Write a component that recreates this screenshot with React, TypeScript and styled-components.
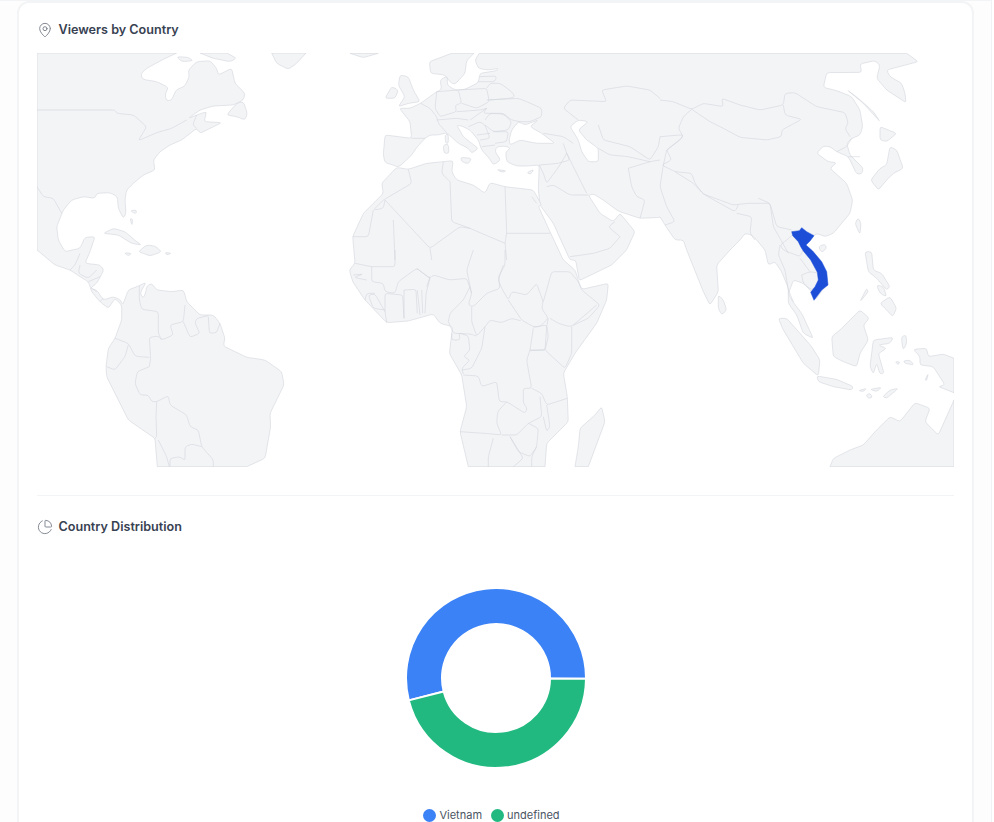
import React from "react";
import styled, { createGlobalStyle } from "styled-components";
import { MapPin, ChartPie } from "lucide-react";

const Global = createGlobalStyle`
  html, body { margin: 0; padding: 0; background: #fff; height: 100%; overflow: hidden; }
  body { font-family: Inter, "Liberation Sans", sans-serif; }
`;

type O = [number, number];
type P = [number, number];
const A: O = [0, 0], B: O = [330, 40], C: O = [660, 40], D: O = [0, 250], E: O = [330, 250], F: O = [660, 250], G: O = [770, 215];

const pts = (o: O, s: string): P[] =>
  s.trim().split(/\s+/).map((p) => {
    const [x, y] = p.split(",").map(Number);
    return [o[0] + x / 3, o[1] + y / 3] as P;
  });

const onFrame = (p: P) => p[0] <= 37.5 || p[0] >= 953.5 || p[1] <= 53.6 || p[1] >= 466.5;
const f = (n: number) => n.toFixed(1);

// rounds each corner by at most a few pixels, so the coasts read as drawn curves
const rounded = (list: P[], isClosed: boolean) => {
  const n = list.length;
  const cut = (a: P, b: P) => {
    const d = Math.hypot(b[0] - a[0], b[1] - a[1]) || 1;
    const t = Math.min(2.6, d * 0.42) / d;
    return [a[0] + (b[0] - a[0]) * t, a[1] + (b[1] - a[1]) * t] as P;
  };
  let d = "";
  for (let i = 0; i < n; i++) {
    const p = list[i];
    const prev = list[(i - 1 + n) % n];
    const next = list[(i + 1) % n];
    const isEnd = !isClosed && (i === 0 || i === n - 1);
    if (isEnd || onFrame(p)) {
      d += `${d ? "L" : "M"}${f(p[0])} ${f(p[1])}`;
    } else {
      const a = cut(p, prev);
      const b = cut(p, next);
      d += `${d ? "L" : "M"}${f(a[0])} ${f(a[1])}Q${f(p[0])} ${f(p[1])} ${f(b[0])} ${f(b[1])}`;
    }
  }
  return d + (isClosed ? "Z" : "");
};

const closed = (...segs: [O, string][]) => rounded(segs.flatMap(([o, s]) => pts(o, s)), true);
const open = (o: O, s: string) => rounded(pts(o, s), false);

const land: string[] = [
  closed(
    [A, "111,159 530,159 490,178 440,205 422,222 428,238 470,245 505,262 495,285 500,303 515,300 528,270 555,258 568,230 565,210 590,185 630,182 650,205 655,225 695,205 705,250 735,280 730,300 700,315 640,318 600,330 565,355 590,345 620,335 612,365 665,368 600,400 590,385 545,420 510,435 480,455 460,480 465,510 430,525 400,550 380,570 375,600 378,640 370,655 355,625 352,590 330,578 290,580 285,595 250,590 215,600 190,630 170,680 175,720 195,755 240,745 255,712 285,710"],
    [D, "270,5 255,40 300,45 312,60 290,100 270,115 290,120 310,150 340,140 362,150 368,165 385,120 415,108 438,97 420,130 430,145 438,125 440,108 455,100 470,120 515,125 550,120 555,135 560,155 600,195 640,195 660,220 675,265 670,288 740,322 795,330 845,365 852,405 810,490 812,530 795,625 740,650 472,650 465,565 385,510 320,380 318,350 325,295 345,265 365,210 365,165 345,145 325,175 300,155 275,125 265,95 240,80 210,60 165,45 111,0"]
  ),
  closed([A, "815,159 830,190 865,208 890,190 918,159"]),
  closed([A, "600,159 640,175 690,185 710,175 680,159"]),
  closed([A, "530,170 565,172 580,182 545,185"]),
  closed([A, "680,345 710,310 730,305 742,340 735,360 710,350"]),
  closed([A, "310,700 340,685 375,695 410,725 425,735 395,730 355,705"]),
  closed([A, "415,755 440,735 465,738 485,755 450,768 430,760"]),
  closed([A, "372,758 395,760 385,768"]),
  closed([A, "495,757 515,760 500,765"]),
  closed([A, "390,632 410,630 408,642"]),
  closed([A, "390,655 398,657 396,677"]),
  closed([B, "60,40 100,53 145,40"]),
  closed([B, "298,65 302,100 345,105 362,128 375,133 405,100 410,62 432,40 365,40"]),
  closed([B, "205,135 210,105 235,110 250,150 270,185 235,190 205,200 225,170"]),
  closed([B, "165,175 185,140 205,150 195,175"]),
  closed([B, "345,285 355,282 355,310 347,310"]),
  closed([B, "340,315 355,312 357,340 342,340"]),
  closed([B, "392,352 425,355 415,372 395,365"]),
  closed([B, "500,388 530,393 515,397"]),
  closed([B, "590,398 612,388 602,403"]),
  closed(
    [B, "200,380 190,375 165,368 160,345 165,285 245,295 240,245 208,205 240,205 272,190 320,155 335,148 330,120 352,108 352,135 375,150 405,148 445,128 450,100 500,92 505,85 475,90 445,85 435,60 448,40"],
    [C, "740,40 775,65 680,90 690,110 725,130 735,160 738,188 680,150 650,115 660,75 645,62 600,72 605,97 500,98 490,142 530,152 575,170 600,210 608,260 600,285 575,295 560,310 570,345 610,385 605,402 590,402 565,350 530,335 510,320 490,318 470,340 505,365 530,368 510,385 560,430 578,480 570,520 520,580 495,590 470,580 458,590 430,620"],
    [F, "440,0 480,35 503,100 465,150 455,125 430,100 400,90 395,105 385,130 395,150 425,190 460,265 430,250 410,195 385,160 385,115 365,65 345,35 325,45 315,0"],
    [C, "290,600 275,585 255,580 240,600"],
    [F, "210,0 170,45 175,125 150,165 130,125 80,0"],
    [C, "70,600 45,600 25,570 15,555 0,530"],
    [B, "990,532 930,535 870,515 860,510 820,480 790,462 775,465 810,520 850,545 870,520 915,575"],
    [E, "890,0 845,45 748,92 737,30"],
    [B, "720,660 670,550 630,495 625,448 628,375 590,378 560,378 530,365 527,335 542,325 525,318 500,320 495,335 512,360 490,375 478,355 455,330 445,300 420,270 395,258 380,255 400,290 425,310 445,325 425,340 415,325 385,310 350,278 325,285 300,285 285,295 262,320 245,345 210,378"]
  ),
  closed(
    [B, "200,382 235,388 290,370 340,365 370,362 365,395 380,420 430,435 465,460 480,428 525,440 610,450 635,495 625,498 660,575 695,650"],
    [E, "700,30 735,60 748,100 755,118 835,100 830,150 800,220 735,310 700,370 712,440 715,515 650,580 645,650 415,650 390,545 410,470 395,375 358,310 368,230 330,220 310,192 235,213 170,218 105,150 68,95 58,60 75,40"],
    [B, "68,590 100,520 130,490 160,460 155,430"]
  ),
  closed([E, "735,650 745,590 750,535 795,495 815,470 825,515 775,650"]),
  closed([C, "475,620 495,612 500,625 485,638"]),
  closed([C, "585,550 595,533 603,550 600,583"]),
  closed([C, "632,420 660,385 680,375 690,320 710,330 730,385 700,400 680,420 655,450"]),
  closed([C, "660,260 710,280 680,305 660,300"]),
  closed([C, "562,150 610,190 660,245 640,215 595,175"]),
  closed([F, "175,135 190,150 200,180 185,195 175,175"]),
  closed([F, "355,205 380,205 420,250 455,290 480,330 475,378 430,340 400,290 370,240"]),
  closed([F, "470,378 530,388 580,410 575,420 520,410 475,395"]),
  closed([F, "515,260 540,240 600,180 628,205 610,225 625,270 600,310 590,350 550,335 520,320"]),
  closed([F, "630,350 640,270 700,262 690,280 655,285 680,295 655,310 672,370 660,372 650,340 640,372"]),
  closed([F, "615,5 635,5 640,60 665,70 690,110 680,120 650,85 625,65"]),
  closed([F, "660,160 690,140 710,175 698,200 680,180"]),
  closed([F, "600,155 620,115 625,125"]),
  closed([F, "650,105 670,110 680,140 660,130"]),
  closed([F, "760,298 800,295 805,320 850,312 882,325 882,428 835,410 855,405 820,350 780,345 780,320"]),
  closed([F, "595,422 620,415 610,425"]),
  closed([F, "630,418 665,412 650,425"]),
  closed([F, "668,440 690,420 715,415 680,445"]),
  closed([F, "618,435 630,430 638,442 625,445"]),
  closed([F, "705,335 720,335 715,345"]),
  closed([F, "730,333 750,330 762,345 735,340"]),
  closed([F, "725,260 738,255 740,280 730,300 725,275"]),
  closed([F, "795,390 805,370 800,392"]),
  closed([F, "510,650 520,625 570,600 610,585 650,540 690,500 720,515 765,458 810,475 795,515 835,555 882,450 882,650"]),
];

const seas: string[] = [
  closed([B, "537,300 545,270 565,245 585,255 625,240 600,260 635,280 675,310 620,310 570,300 540,315"]),
  closed([B, "720,260 745,240 775,245 745,270 770,300 805,325 805,365 775,365 755,335 745,300"]),
];

const borders: string[] = [
  open(A, "111,330 345,330 350,340 400,345 440,380 415,422 470,398 515,385 560,360"),
  open(A, "590,345 578,375 590,385"),
  open(A, "111,560 130,590 160,595 185,640"),
  open(D, "210,60 225,45 240,10"),
  open(D, "240,45 235,70 265,85 290,60"),
  open(D, "265,95 300,80"),
  open(D, "275,115 290,125"),
  open(D, "300,155 310,145"),
  open(D, "418,108 418,150 425,178 475,185 475,250 485,270 520,255 510,225 550,215 555,165"),
  open(D, "550,215 570,262 600,250 585,220 590,205 625,197"),
  open(D, "625,200 628,250 650,248 660,220"),
  open(D, "485,270 475,258 448,262 452,325 448,350"),
  open(D, "448,322 420,320 405,318 385,280 345,265"),
  open(D, "385,285 375,320 345,360 320,350"),
  open(D, "448,350 412,365 405,400 420,435 445,435 455,455 470,455 505,437 510,465 560,495 570,530 595,540 605,590 640,630 640,650"),
  open(D, "470,455 468,500 470,560 465,565"),
  open(D, "510,650 510,625 540,620 555,632 555,590 575,582 605,590"),
  open(D, "508,650 500,620 475,570"),
  open(B, "245,295 285,295"),
  open(B, "272,190 300,205 320,230 325,250 350,278"),
  open(B, "320,155 385,150 395,190 375,195 380,215 330,230 315,205 320,155"),
  open(B, "385,150 470,145 478,185 440,205 395,190"),
  open(B, "380,215 450,210 470,205"),
  open(B, "320,240 380,235 415,240"),
  open(B, "470,180 565,175 590,185 635,205 635,230 600,245 570,245 545,240 520,220 480,220 460,220 470,205"),
  open(B, "470,145 480,130 510,130 545,155 555,170 540,175 478,180"),
  open(B, "445,125 495,125 500,108 450,110"),
  open(B, "465,240 480,220 520,222 545,245 535,270 490,275 465,255"),
  open(B, "490,275 535,275 530,305 495,310"),
  open(B, "420,240 470,205"),
  open(B, "415,260 450,245 465,255 480,295 450,300"),
  open(B, "440,285 480,280"),
  open(B, "455,320 495,315"),
  open(B, "700,310 710,340 720,360 685,370 628,375"),
  open(B, "640,280 700,290 730,310"),
  open(B, "745,240 700,205 720,180 830,185 815,150 890,138 960,150 990,175"),
  open(C, "0,180 40,185 95,208 130,190 190,200 185,175 240,195 300,210 370,195 375,160 405,158 470,200 555,218 565,250 555,265 570,290"),
  open(C, "95,208 150,245 200,270 240,292 320,300 365,290 365,270 425,238 375,225 370,195"),
  open(B, "805,255 820,300 900,320 960,360 985,320 990,290"),
  open(B, "805,325 840,345 895,350 960,365"),
  open(B, "895,385 960,365 990,360"),
  open(C, "0,290 60,285 70,285 60,300 20,330"),
  open(C, "95,208 70,230 55,265 70,290 20,330 35,360 5,375 45,395 95,400 105,430 130,462 220,495 265,490 330,490 350,560 395,570"),
  open(C, "20,330 10,375 0,440 20,500 45,545 15,555"),
  open(C, "45,395 100,430 130,462 225,515 235,495"),
  open(C, "230,520 275,530 270,580 285,600"),
  open(C, "295,475 330,490 340,560 360,595 385,640"),
  open(C, "530,335 560,320 575,295"),
  open(C, "565,350 600,350"),
  open(G, "68,60 50,75 30,90 40,105 65,115 90,125 100,105"),
  open(G, "90,130 120,170"),
  open(G, "95,180 120,170 150,175 150,205 125,225 100,205 95,180"),
  open(G, "30,90 25,120 45,165 55,225 70,260"),
  open(B, "235,388 245,430 160,480 130,510 160,505 165,480"),
  open(B, "130,510 115,590 68,590"),
  open(B, "340,365 335,400 360,425"),
  open(B, "165,480 300,625 390,560 420,565"),
  open(B, "190,540 195,660"),
  open(B, "300,625 305,660"),
  open(B, "360,425 365,545 420,565 525,610"),
  open(B, "525,440 530,580 525,610 530,660"),
  open(B, "530,580 660,580"),
  open(E, "75,40 125,50 195,50 195,0"),
  open(E, "125,50 125,95 160,100 165,125 195,130 205,95 260,55 300,85"),
  open(E, "260,55 300,85 310,75 360,90 410,85 425,130"),
  open(E, "290,110 300,80"),
  open(E, "420,110 400,150 360,190 355,215"),
  open(E, "285,190 288,130 300,85"),
  open(E, "262,120 270,195"),
  open(E, "275,120 278,190"),
  open(E, "222,120 222,205"),
  open(E, "222,120 258,118 262,190"),
  open(E, "222,205 218,135 165,130 165,185 170,218"),
  open(E, "165,180 130,175 115,135 135,132 165,185"),
  open(E, "105,150 110,130 135,130"),
  open(E, "70,75 100,72 72,82 110,90"),
  open(E, "430,0 410,60 425,130 415,165 430,170 470,130 510,115 505,80 525,45 525,0"),
  open(E, "520,45 505,90 515,115 535,150 545,125 590,135 620,100 630,130 640,155 635,175 655,205 630,230 610,230 575,210 535,150"),
  open(E, "425,170 425,215 440,258 465,230 480,210 515,218 545,205 572,212"),
  open(E, "355,215 370,250 420,252 440,258"),
  open(E, "365,250 365,270 390,270 388,250"),
  open(E, "390,250 415,258 420,300 400,320 420,330 395,355 400,372"),
  open(E, "465,230 455,295 425,355 395,360"),
  open(E, "400,375 445,378 455,410 500,395 508,455 530,455 585,490 592,475 580,460 580,415 605,415 590,330 600,300 610,235"),
  open(E, "640,155 665,65 720,65 745,95 755,120 810,165 775,205 720,230 685,220 660,205"),
  open(E, "655,205 650,230 645,300 705,355 725,310 725,230"),
  open(E, "610,232 650,225 655,260 645,300 600,302"),
  open(E, "600,300 645,300"),
  open(E, "712,445 650,465 635,430 605,415"),
  open(E, "730,225 800,165"),
  open(E, "530,455 503,485 500,520 515,555 465,550 390,545"),
  open(E, "515,555 560,555 595,520 635,500 630,440"),
  open(E, "650,465 660,530 650,545 640,500"),
  open(E, "595,520 625,535 620,590 605,620 605,650"),
  open(E, "540,560 565,605 600,620 620,590"),
  open(E, "490,565 475,620 475,650"),
  open(E, "540,560 580,625 550,650"),
  open(B, "628,375 640,400 650,430 690,375 710,340"),
  open(B, "650,440 670,435 720,465 775,465"),
  open(B, "710,340 730,380 770,460"),
  open(B, "895,385 905,440 920,470 945,480 930,535"),
  open(B, "720,650 790,640 840,625 870,590"),
  open(B, "870,590 835,560 855,545"),
  open(B, "605,470 620,490"),
];

const vietnamOutline = pts(G, "65,50 88,47 95,38 110,50 132,62 120,78 108,90 128,108 155,140 170,170 174,210 155,225 132,256 122,232 135,215 145,195 142,172 122,135 100,108 92,95 85,80 68,62");
const vietnam = "M" + vietnamOutline.map((p) => `${f(p[0])} ${f(p[1])}`).join("L") + "Z";

const polar = (cx: number, cy: number, r: number, deg: number) => {
  const t = (deg * Math.PI) / 180;
  return `${(cx + r * Math.cos(t)).toFixed(2)} ${(cy + r * Math.sin(t)).toFixed(2)}`;
};
const slice = (a0: number, a1: number, R = 90, r = 54, c = 90) => {
  const large = a1 - a0 > 180 ? 1 : 0;
  return `M${polar(c, c, R, a0)}A${R} ${R} 0 ${large} 1 ${polar(c, c, R, a1)}L${polar(c, c, r, a1)}A${r} ${r} 0 ${large} 0 ${polar(c, c, r, a0)}Z`;
};

const Page = styled.div`
  width: 994px;
  height: 822px;
  overflow: hidden;
  display: flex;
`;
const Main = styled.main`
  width: 992px;
  height: 822px;
  flex: none;
  box-sizing: border-box;
  padding: 0 18px 0 17px;
  background: #fdfdfd;
  border-top: 1px solid #f3f4f6;
  border-right: 1px solid #f1f2f3;
`;
const Card = styled.section`
  box-sizing: border-box;
  width: 957px;
  height: 900px;
  background: #fff;
  border: 2px solid #f3f4f6;
  border-radius: 12px;
  padding: 19px 18px 0;
`;
const Heading = styled.h3`
  display: flex;
  align-items: center;
  gap: 5.5px;
  margin: 0;
  height: 16px;
  font-size: 12.6px;
  line-height: 16px;
  font-weight: 600;
  color: #374151;
  svg { color: #6b7280; flex: none; }
`;
const MapSvg = styled.svg`
  display: block;
  width: 917px;
  height: 414px;
  margin-top: 15px;
`;
const Land = styled.path`
  fill: #f3f4f6;
  stroke: #d1d5db;
  stroke-width: 0.6;
  stroke-linejoin: round;
`;
const Sea = styled.path`
  fill: #fff;
  stroke: #d1d5db;
  stroke-width: 0.6;
  stroke-linejoin: round;
`;
const Border = styled.path`
  fill: none;
  stroke: #d1d5db;
  stroke-width: 0.6;
  stroke-linejoin: round;
`;
const Highlight = styled.path`
  fill: #1d4ed8;
  stroke: #1d4ed8;
  stroke-width: 0.5;
  stroke-linejoin: round;
`;
const Divider = styled.hr`
  border: 0;
  height: 1px;
  background: #f3f4f6;
  margin: 28px 0 23px;
`;
const ChartBody = styled.div`
  display: flex;
  flex-direction: column;
  align-items: center;
  margin-top: 53px;
`;
const Legend = styled.ul`
  display: flex;
  gap: 9px;
  list-style: none;
  margin: 40px 8px 0 0;
  padding: 0;
`;
const LegendItem = styled.li`
  display: flex;
  align-items: center;
  gap: 3px;
  font-size: 11px;
  line-height: 14px;
  color: #4b5563;
`;
const Dot = styled.span<{ $color: string }>`
  width: 13px;
  height: 13px;
  border-radius: 50%;
  background: ${(p) => p.$color};
`;
const DonutSvg = styled.svg`
  display: block;
  width: 180px;
  height: 180px;
`;
const Slice = styled.path<{ $color: string }>`
  fill: ${(p) => p.$color};
  stroke: #fff;
  stroke-width: 2;
`;

export default function App() {
  return (
    <Page>
      <Global />
      <Main>
        <Card>
          <Heading>
            <MapPin size={16} strokeWidth={1.25} />
            Viewers by Country
          </Heading>
          <MapSvg viewBox="37 53 917 414">
            {land.map((d, i) => <Land key={i} d={d} />)}
            {seas.map((d, i) => <Sea key={i} d={d} />)}
            {borders.map((d, i) => <Border key={i} d={d} />)}
            <Highlight d={vietnam} />
          </MapSvg>
          <Divider />
          <Heading>
            <ChartPie size={16} strokeWidth={1.25} />
            Country Distribution
          </Heading>
          <ChartBody>
            <DonutSvg viewBox="0 0 180 180">
              <Slice $color="#3b82f6" d={slice(165.6, 360.5)} />
              <Slice $color="#22b981" d={slice(0.5, 165.6)} />
            </DonutSvg>
            <Legend>
              <LegendItem><Dot $color="#3b82f6" />Vietnam</LegendItem>
              <LegendItem><Dot $color="#22b981" />undefined</LegendItem>
            </Legend>
          </ChartBody>
        </Card>
      </Main>
    </Page>
  );
}
